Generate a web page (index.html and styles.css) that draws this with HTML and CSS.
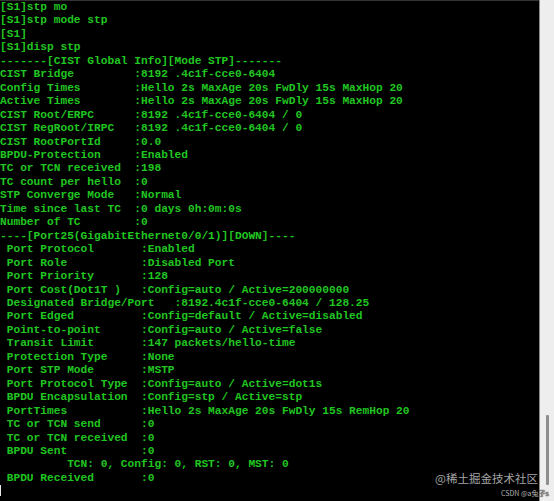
FILE: index.html
```html
<!DOCTYPE html>
<html>
<head>
<meta charset="utf-8">
<link rel="stylesheet" href="styles.css">
</head>
<body>
<div class="screen">
  <div class="term">
<pre class="out">[S1]stp mo
[S1]stp mode stp
[S1]
[S1]disp stp
-------[CIST Global Info][Mode STP]-------
CIST Bridge         :8192 .4c1f-cce0-6404
Config Times        :Hello 2s MaxAge 20s FwDly 15s MaxHop 20
Active Times        :Hello 2s MaxAge 20s FwDly 15s MaxHop 20
CIST Root/ERPC      :8192 .4c1f-cce0-6404 / 0
CIST RegRoot/IRPC   :8192 .4c1f-cce0-6404 / 0
CIST RootPortId     :0.0
BPDU-Protection     :Enabled
TC or TCN received  :198
TC count per hello  :0
STP Converge Mode   :Normal
Time since last TC  :0 days 0h:0m:0s
Number of TC        :0
----[Port25(GigabitEthernet0/0/1)][DOWN]----
 Port Protocol       :Enabled
 Port Role           :Disabled Port
 Port Priority       :128
 Port Cost(Dot1T )   :Config=auto / Active=200000000
 Designated Bridge/Port   :8192.4c1f-cce0-6404 / 128.25
 Port Edged          :Config=default / Active=disabled
 Point-to-point      :Config=auto / Active=false
 Transit Limit       :147 packets/hello-time
 Protection Type     :None
 Port STP Mode       :MSTP
 Port Protocol Type  :Config=auto / Active=dot1s
 BPDU Encapsulation  :Config=stp / Active=stp
 PortTimes           :Hello 2s MaxAge 20s FwDly 15s RemHop 20
 TC or TCN send      :0
 TC or TCN received  :0
 BPDU Sent           :0
          TCN: 0, Config: 0, RST: 0, MST: 0
 BPDU Received       :0
<span class="cursor"></span></pre>
    <div class="wm">@稀土掘金技术社区</div>
  </div>
  <div class="scrollbar"><div class="thumb"></div></div>
  <div class="csdn">CSDN @a兔子s</div>
</div>
</body>
</html>
```

FILE: styles.css
```css
html, body {
  margin: 0;
  padding: 0;
  background: #000;
}
.screen {
  position: relative;
  display: flex;
  width: 554px;
  height: 501px;
  overflow: hidden;
}
.term {
  position: relative;
  flex: 1;
  background: #000;
  border-top: 1px solid #333;
}
.out {
  margin: 0;
  padding: 0;
  font-family: "Liberation Mono", "Courier New", monospace;
  font-weight: bold;
  font-size: 11.2px;
  line-height: 13.46px;
  color: #20c620;
  white-space: pre;
}
.cursor {
  display: inline-block;
  width: 1px;
  height: 11px;
  background: #e8e8e8;
  vertical-align: -1px;
}
.wm {
  position: absolute;
  right: 1px;
  top: 469px;
  font-family: "Noto Sans CJK SC", "Noto Sans", sans-serif;
  font-size: 11.5px;
  line-height: 16px;
  color: #a4a4a4;
}
.scrollbar {
  width: 14px;
  border-left: 1px solid #8a8a8a;
  background: #eeeeee;
  padding-top: 415px;
}
.thumb {
  width: 3px;
  height: 70px;
  margin-left: 6px;
  background: #8e8e8e;
  border-radius: 1px;
}
.csdn {
  position: absolute;
  left: 501px;
  top: 488px;
  font-family: "Noto Sans CJK SC", "Noto Sans", sans-serif;
  font-size: 7px;
  line-height: 10px;
  color: #b4b4b4;
  text-shadow: 0 0 1px #000, 0 0 1px #000;
  white-space: nowrap;
}
```
